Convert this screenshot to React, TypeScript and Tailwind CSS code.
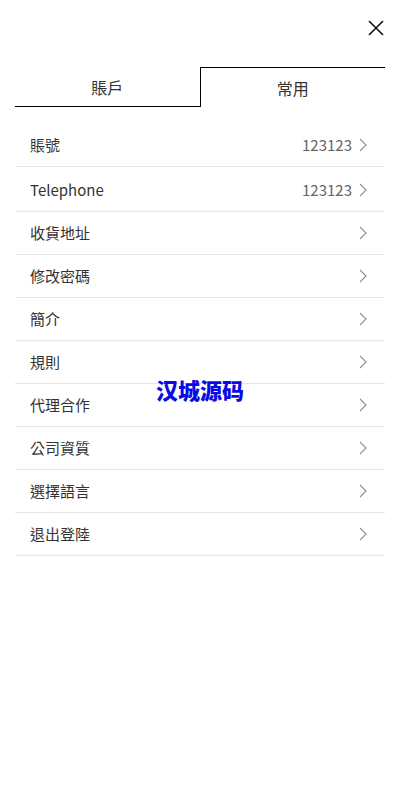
import React, { useState } from 'react';

type Row = { label: string; value?: string; tall?: boolean };

const rows: Row[] = [
  { label: '賬號', value: '123123' },
  { label: 'Telephone', value: '123123', tall: true },
  { label: '收貨地址' },
  { label: '修改密碼' },
  { label: '簡介' },
  { label: '規則' },
  { label: '代理合作' },
  { label: '公司資質' },
  { label: '選擇語言' },
  { label: '退出登陸' },
];

const font = { fontFamily: '"Noto Sans CJK TC", "Noto Sans", sans-serif' };

const Chevron = () => (
  <svg width="10" height="16" viewBox="0 0 10 16" fill="none" className="ml-[6px]">
    <path d="M2 2 L8 8 L2 14" stroke="#8f8f8f" strokeWidth="1.1" />
  </svg>
);

export default function App() {
  const [tab, setTab] = useState<'account' | 'common'>('common');

  return (
    <div className="relative w-[400px] h-[800px] bg-white text-[#333]" style={font}>
      {/* Close */}
      <div className="flex justify-end pt-[20px] pr-[16px] h-[67px]">
        <svg width="16" height="16" viewBox="0 0 16 16">
          <path d="M1 1 L15 15 M15 1 L1 15" stroke="#111" strokeWidth="1.6" />
        </svg>
      </div>

      {/* Tabs */}
      <div className="flex mx-[15px] h-[40px]">
        <button
          onClick={() => setTab('account')}
          className="flex-1 border-b border-black text-[16px] text-[#333] leading-none"
        >
          賬戶
        </button>
        <button
          onClick={() => setTab('common')}
          className="flex-1 border-t border-l border-black text-[16px] text-[#333] leading-none pt-[1px]"
        >
          常用
        </button>
      </div>

      {/* List */}
      <div className="mx-[15px] mt-[17px]">
        {rows.map(r => (
          <div
            key={r.label}
            className={`flex items-center justify-between border-b border-[#e6e6e6] pl-[15px] pr-[17px] ${r.tall ? 'h-[45px] pt-[2px]' : 'h-[43px]'}`}
          >
            <span className="text-[15px] text-[#333]">{r.label}</span>
            <div className="flex items-center">
              {r.value && <span className="text-[15px] text-[#666]">{r.value}</span>}
              <Chevron />
            </div>
          </div>
        ))}
      </div>

      {/* Watermark */}
      <div
        className="absolute left-0 right-0 top-[373px] text-center text-[22px] font-black text-[#0a0ae6] pointer-events-none"
        style={{ fontFamily: '"Noto Sans CJK SC", sans-serif' }}
      >
        汉城源码
      </div>
    </div>
  );
}
